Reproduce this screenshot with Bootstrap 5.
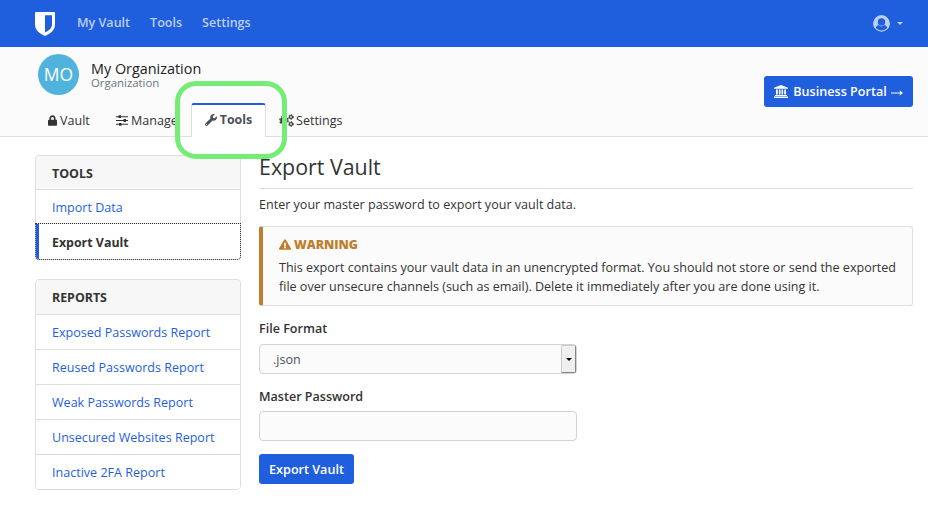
<!DOCTYPE html>
<html lang="en">
<head>
<meta charset="utf-8">
<meta name="viewport" content="width=device-width, initial-scale=1">
<title>Export Vault</title>
<link href="https://cdn.jsdelivr.net/npm/bootstrap@5.3.0/dist/css/bootstrap.min.css" rel="stylesheet">
<style>
body{font-family:"Open Sans",sans-serif;font-size:12.55px;line-height:19px;color:#333;background:#fff;overflow:hidden}
svg{display:block;flex:none}
.topbar{height:47px;background:#1f5fdd;padding:0 25px 0 35px}
.topbar .nav-link{color:#bccff5;font-weight:600;padding:0;line-height:20px}
.topbar .nav{gap:20px;margin:-2px 0 0 22px}
.account{color:#bccff5;gap:7px;margin-top:-1px}
.caret{border:3px solid transparent;border-top-color:currentColor;border-bottom:0}
.org-header{height:90px;background:#fbfbfb;border-bottom:1px solid #dcdee0;padding:7px 15px 0 35px}
.org-top{height:49px}
.avatar{width:41px;height:41px;border-radius:50%;background:#50b3de;color:#fff;font-size:17.5px;margin-left:3px}
.org-name{font-size:14.4px;line-height:17px;color:#222}
.org-kind{font-size:11.4px;line-height:12px;color:#6c757d}
.btn-blue{--bs-btn-bg:#1f5fdd;--bs-btn-color:#fff;--bs-btn-border-color:#1f5fdd;--bs-btn-hover-bg:#194ebc;--bs-btn-hover-color:#fff;--bs-btn-font-weight:600;--bs-btn-font-size:12.6px;--bs-btn-border-radius:3px;line-height:19px;padding:0;border:0}
.portal{width:149px;height:31px;gap:5px;margin-top:22px}
.portal-arrow{width:12px;height:6px;margin:2px 0 0 -1px}
.export-btn{width:95px;height:30px;margin-top:13px}
.org-tabs{height:34px}
.org-tabs .nav-link{color:#333;padding:0;height:34px;display:flex;align-items:center;border:0;line-height:19px}
.org-tabs .nav-link.active{width:75px;justify-content:center;gap:3px;background:#fff;border:1px solid #dcdee0;border-top:2px solid #1f5fdd;border-bottom:0;border-radius:3px 3px 0 0;font-weight:700;color:#495057;font-size:12.4px;padding-bottom:3px}
.org-tabs .tab-vault{margin-left:13px;width:68px;gap:3px}
.org-tabs .tab-manage{width:75px;gap:3px}
.org-tabs .tab-settings{margin-left:13px;gap:2px}
.highlight-ring{position:absolute;left:175px;top:81px;width:112px;height:78px;border:5px solid #75ec78;border-radius:21px;z-index:5;pointer-events:none}
.page-body{padding:18px 15px 0 35px;gap:18px}
.side-col{width:206px;flex:none}
.side-card{border:1px solid #dcdee0;border-radius:4px;--bs-card-inner-border-radius:3px}
.side-card .card-header{height:34px;padding:1px 16px 0;background:#f7f7f7;border-bottom:1px solid #dcdee0;font-weight:700;font-size:12.4px;display:flex;align-items:center}
.side-card .list-group-item{height:35px;padding:0 16px;color:#1f5fdd;border-color:#dcdee0;display:flex;align-items:center;line-height:19px}
.side-card .list-group-item:first-child{height:34px;padding-top:2px}
.side-card .list-group-item.current{color:#333;font-weight:700;font-size:12.4px;border-left:3px solid #1f5fdd;padding:2px 13px 0;outline:1px dotted #333;outline-offset:0}
.reports{margin-top:19px}
.reports .card-header{height:35px}
.reports .list-group-item:first-child{height:35px;padding-top:0}
.reports .list-group-item:last-child{height:34px}
.page-title{font-size:21.4px;line-height:28px;font-weight:400;padding-bottom:7px;margin:-2px 0 6px;border-bottom:1px solid #dcdee0}
.warn-box{margin-top:12px;height:80px;border:1px solid #dcdee0;border-left:4px solid #bf7e2b;border-radius:3px;background:#fbfbfb;padding:8px 0 8px 16px}
.warn-title{color:#bf7e2b;font-weight:800;font-size:12.3px;gap:3px;margin-bottom:4px}
.form-area{width:318px;margin-top:13px}
.form-area .form-label{font-weight:600;margin:0 0 6px;line-height:19px;display:block}
.form-area label.form-label{margin-bottom:5px}
.field{height:30px;min-height:0;font-size:12.55px;padding:0 13px;background:#fbfbfb;border:1px solid #ced4da;border-radius:4px;color:#495057}
.select-box{padding-right:0;margin-bottom:13px}
.select-arrow{width:15px;height:28px;background:#efefef;border:1px solid #ccc;border-right:1px solid #858585;border-bottom:1px solid #858585;border-radius:0 2px 2px 0;color:#000}
</style>
<script src="https://cdn.jsdelivr.net/npm/bootstrap@5.3.0/dist/js/bootstrap.bundle.min.js"></script>
</head>
<body>
<nav class="topbar d-flex align-items-center">
  <svg width="20" height="24" viewBox="0 0 20 24"><path fill="#fff" fill-rule="evenodd" d="M1 0H19Q20 0 20 1V12.5C20 18 15.500 21.500 10 24C4.500 21.500 0 18 0 12.500V1Q0 0 1 0ZM10 3.200V20.500C14 18.500 17 16.300 17 12.500V3.200Z"/></svg>
  <ul class="nav">
    <li class="nav-item"><a class="nav-link" href="#">My Vault</a></li>
    <li class="nav-item"><a class="nav-link" href="#">Tools</a></li>
    <li class="nav-item"><a class="nav-link" href="#">Settings</a></li>
  </ul>
  <div class="account d-flex align-items-center ms-auto">
    <svg width="17" height="17" viewBox="0 0 17 17"><circle cx="8.500" cy="8.500" r="7.700" fill="none" stroke="currentColor" stroke-width="1.200"/><path fill="currentColor" fill-rule="evenodd" d="M8.500 .5A8 8 0 0 0 2.400 13.600C2.900 11.700 3.900 10.500 5.600 10A4 4 0 0 0 11.400 10C13.100 10.500 14.100 11.700 14.600 13.600A8 8 0 0 0 8.500 .5ZM8.500 3.200A3.700 3.700 0 1 1 8.500 10.600A3.700 3.700 0 1 1 8.500 3.200Z"/></svg>
    <span class="caret"></span>
  </div>
</nav>

<header class="org-header">
  <div class="org-top d-flex justify-content-between align-items-start">
    <div class="d-flex align-items-center">
      <div class="avatar d-flex align-items-center justify-content-center">MO</div>
      <div class="ms-2 ps-1"><div class="org-name">My Organization</div><div class="org-kind">Organization</div></div>
    </div>
    <a class="btn btn-blue portal d-flex align-items-center justify-content-center" href="#">
      <svg width="14" height="13" viewBox="0 0 14 13" fill="currentColor"><path d="M7 0L14 2.700V3.800H0V2.700ZM2 4.400H3.800V9.500H2ZM4.900 4.400H6.500V9.500H4.900ZM7.500 4.400H9.100V9.500H7.500ZM10.200 4.400H12V9.500H10.200ZM1 10H13V11H1ZM0 11.600H14V13H0Z"/></svg>
      <span>Business Portal</span><svg class="portal-arrow" viewBox="0 0 12 6"><path d="M0 3H11" stroke="currentColor"/><path d="M8.500 0.200L12 3L8.500 5.800L9.300 3Z" fill="currentColor"/></svg>
    </a>
  </div>
  <ul class="org-tabs nav">
    <li><a class="nav-link tab-vault" href="#"><svg width="9" height="11" viewBox="0 0 448 512" fill="currentColor"><path d="M400 224h-24v-72C376 68.200 307.800 0 224 0S72 68.200 72 152v72H48c-26.500 0-48 21.500-48 48v192c0 26.500 21.500 48 48 48h352c26.500 0 48-21.500 48-48V272c0-26.500-21.500-48-48-48zm-104 0H152v-72c0-39.700 32.300-72 72-72s72 32.300 72 72v72z"/></svg>Vault</a></li>
    <li><a class="nav-link tab-manage" href="#"><svg width="12" height="11" viewBox="0 0 12 11" fill="currentColor"><path d="M0 1.200H12V2.200H0ZM0 5H12V6H0ZM0 8.800H12V9.800H0ZM2.500 0.300H5V3.100H2.500ZM7.500 4.100H10V6.900H7.500ZM3 7.900H5.500V10.700H3Z"/></svg>Manage</a></li>
    <li><a class="nav-link active" href="#"><svg width="12" height="12" viewBox="0 0 512 512" fill="currentColor"><path d="M507.730 109.100c-2.240-9.030-13.540-12.090-20.120-5.510l-74.360 74.360-67.880-11.310-11.310-67.880 74.360-74.360c6.620-6.620 3.430-17.900-5.660-20.160-47.380-11.740-99.550.91-136.580 37.930-39.640 39.640-50.550 97.100-34.050 147.200L18.740 402.760c-24.990 24.990-24.990 65.510 0 90.500 24.990 24.990 65.510 24.990 90.500 0l213.210-213.210c50.120 16.710 107.470 5.680 147.370-34.220 37.070-37.070 49.700-89.320 37.910-136.730zM64 472c-13.250 0-24-10.750-24-24 0-13.260 10.750-24 24-24s24 10.740 24 24c0 13.250-10.750 24-24 24z"/></svg>Tools</a></li>
    <li><a class="nav-link tab-settings" href="#"><svg width="15" height="13" viewBox="0 0 15 13" fill="none" stroke="currentColor"><circle cx="5" cy="6.500" r="2.700" stroke-width="2"/><circle cx="5" cy="6.500" r="4.200" stroke-width="1.200" stroke-dasharray="1.650 1.650"/><circle cx="12" cy="3" r="1.500" stroke-width="1.200"/><circle cx="12" cy="3" r="2.400" stroke-dasharray="1.260 1.260"/><circle cx="12" cy="10" r="1.500" stroke-width="1.200"/><circle cx="12" cy="10" r="2.400" stroke-dasharray="1.260 1.260"/></svg>Settings</a></li>
  </ul>
</header>
<div class="highlight-ring"></div>

<div class="page-body d-flex align-items-start">
  <aside class="side-col">
    <div class="card side-card">
      <div class="card-header">TOOLS</div>
      <div class="list-group list-group-flush">
        <a class="list-group-item" href="#">Import Data</a>
        <a class="list-group-item current" href="#">Export Vault</a>
      </div>
    </div>
    <div class="card side-card reports">
      <div class="card-header">REPORTS</div>
      <div class="list-group list-group-flush">
        <a class="list-group-item" href="#">Exposed Passwords Report</a>
        <a class="list-group-item" href="#">Reused Passwords Report</a>
        <a class="list-group-item" href="#">Weak Passwords Report</a>
        <a class="list-group-item" href="#">Unsecured Websites Report</a>
        <a class="list-group-item" href="#">Inactive 2FA Report</a>
      </div>
    </div>
  </aside>
  <main class="flex-grow-1">
    <h1 class="page-title">Export Vault</h1>
    <p class="mb-0">Enter your master password to export your vault data.</p>
    <div class="warn-box">
      <div class="warn-title d-flex align-items-center"><svg width="12" height="11" viewBox="0 0 576 512" fill="currentColor"><path d="M569.517 440.013C587.975 472.007 564.806 512 527.940 512H48.054c-36.937 0-59.999-40.055-41.577-71.987L246.423 23.985c18.467-32.009 64.720-31.951 83.154 0l239.940 416.028zM288 354c-25.405 0-46 20.595-46 46s20.595 46 46 46 46-20.595 46-46-20.595-46-46-46zm-43.673-165.346l7.418 136c.347 6.364 5.609 11.346 11.982 11.346h48.546c6.373 0 11.635-4.982 11.982-11.346l7.418-136c.375-6.874-5.098-12.654-11.982-12.654h-63.383c-6.884 0-12.356 5.780-11.981 12.654z"/></svg>WARNING</div>
      <div>This export contains your vault data in an unencrypted format. You should not store or send the exported<br>file over unsecure channels (such as email). Delete it immediately after you are done using it.</div>
    </div>
    <form class="form-area">
      <span class="form-label">File Format</span>
      <div class="field select-box d-flex align-items-center justify-content-between">.json<span class="select-arrow d-flex align-items-center justify-content-center"><span class="caret"></span></span></div>
      <label class="form-label" for="pw">Master Password</label>
      <input class="form-control field" id="pw" type="password">
      <button class="btn btn-blue export-btn" type="button">Export Vault</button>
    </form>
  </main>
</div>
</body>
</html>
